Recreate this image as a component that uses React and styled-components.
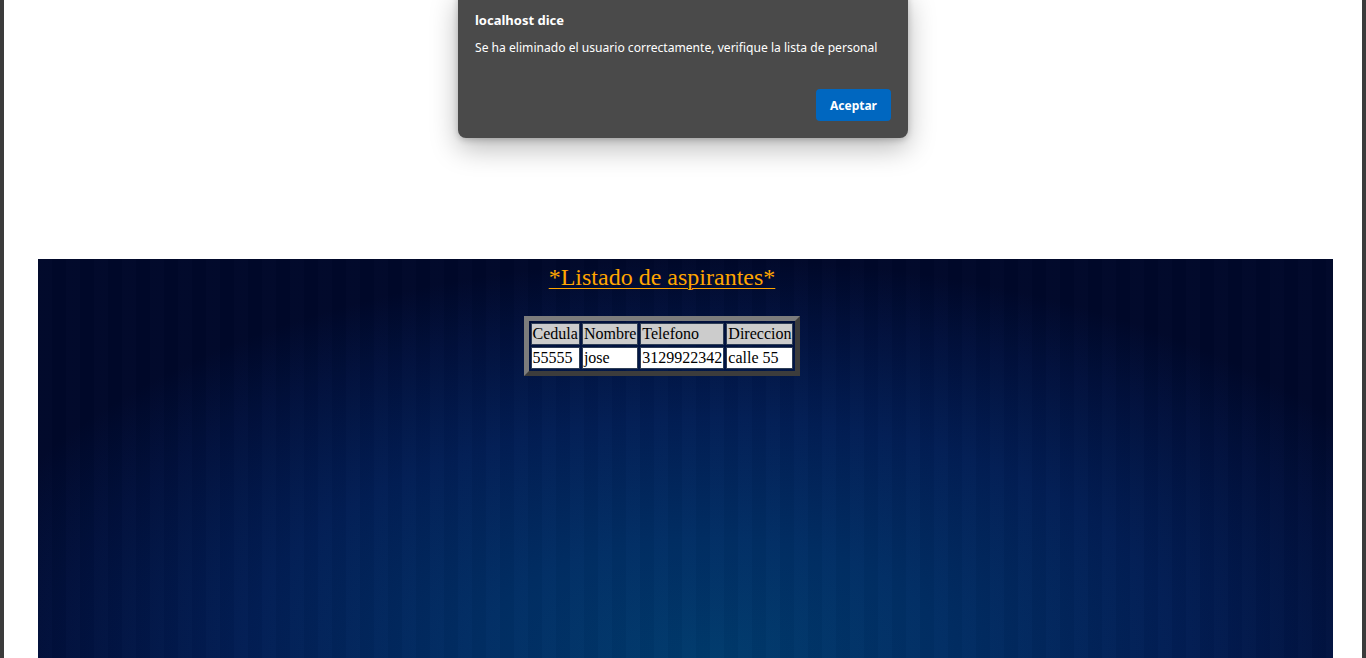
import React from 'react';
import styled, { createGlobalStyle } from 'styled-components';

const GlobalStyle = createGlobalStyle`
  html, body {
    margin: 0;
    padding: 0;
    background: #ffffff;
    height: 100%;
    overflow: hidden;
  }
  #root {
    height: 100%;
  }
`;

const Frame = styled.div`
  position: relative;
  height: 658px;
  box-sizing: border-box;
  border-left: 4px solid #3b3b3b;
  border-right: 4px solid #3b3b3b;
  padding: 259px 29px 0 34px;
  background: #ffffff;
  overflow: hidden;
`;

const Panel = styled.div`
  height: 100%;
  box-sizing: border-box;
  padding-right: 47px;
  display: flex;
  flex-direction: column;
  align-items: center;
  background:
    repeating-linear-gradient(90deg, rgba(255, 255, 255, 0.008) 0 14px, rgba(0, 0, 0, 0.03) 14px 28px),
    radial-gradient(ellipse 60% 100% at 52% 100%, #003b6d 0%, #012e65 30%, #021e55 60%, #01103c 85%, #00082a 100%);
  font-family: "Liberation Serif", "Times New Roman", serif;
`;

const Heading = styled.h1`
  margin: 0;
  padding-top: 4px;
  font-size: 24px;
  font-weight: normal;
  line-height: 28px;
  color: #ffa500;
  text-decoration: underline;
  text-underline-offset: 3px;
  text-decoration-thickness: 1px;
`;

const Table = styled.table`
  margin-top: 25px;
  border-width: 5px;
  border-style: solid;
  border-color: #7c7c7c #3c3c3c #3c3c3c #7c7c7c;
  border-spacing: 2px;
  font-size: 16px;
`;

const Cell = styled.td`
  border: 1px solid #2f3e55;
  padding: 1px 1px;
  line-height: 18px;
  color: #000;
  background: ${props => (props.$head ? '#cccccc' : '#ffffff')};
  white-space: nowrap;
`;

const Dialog = styled.div`
  position: absolute;
  top: -10px;
  left: 454px;
  width: 450px;
  height: 148px;
  box-sizing: border-box;
  padding: 22px 17px 17px 17px;
  background: #4a4a4a;
  border-radius: 8px;
  box-shadow: 0 10px 28px rgba(0, 0, 0, 0.28), 0 2px 6px rgba(0, 0, 0, 0.2);
  font-family: "Noto Sans", "Open Sans", sans-serif;
  color: #ffffff;
  display: flex;
  flex-direction: column;
`;

const DialogTitle = styled.div`
  font-size: 13px;
  font-weight: bold;
  line-height: 17px;
`;

const DialogMessage = styled.div`
  margin-top: 11px;
  font-size: 12.1px;
  line-height: 16px;
`;

const DialogActions = styled.div`
  margin-top: auto;
  display: flex;
  justify-content: flex-end;
`;

const AcceptButton = styled.button`
  width: 75px;
  height: 32px;
  border: none;
  border-radius: 4px;
  background: #0067c0;
  color: #ffffff;
  font-family: "Noto Sans", "Open Sans", sans-serif;
  font-size: 12px;
  font-weight: bold;
  cursor: pointer;
`;

const rows = [['55555', 'jose', '3129922342', 'calle 55']];

export default function App() {
  return (
    <>
      <GlobalStyle />
      <Frame>
        <Panel>
          <Heading>*Listado de aspirantes*</Heading>
          <Table>
            <tbody>
              <tr>
                {['Cedula', 'Nombre', 'Telefono', 'Direccion'].map(h => (
                  <Cell key={h} $head>{h}</Cell>
                ))}
              </tr>
              {rows.map(r => (
                <tr key={r[0]}>
                  {r.map((c, i) => (
                    <Cell key={i}>{c}</Cell>
                  ))}
                </tr>
              ))}
            </tbody>
          </Table>
        </Panel>
        <Dialog>
          <DialogTitle>localhost dice</DialogTitle>
          <DialogMessage>
            Se ha eliminado el usuario correctamente, verifique la lista de personal
          </DialogMessage>
          <DialogActions>
            <AcceptButton>Aceptar</AcceptButton>
          </DialogActions>
        </Dialog>
      </Frame>
    </>
  );
}
